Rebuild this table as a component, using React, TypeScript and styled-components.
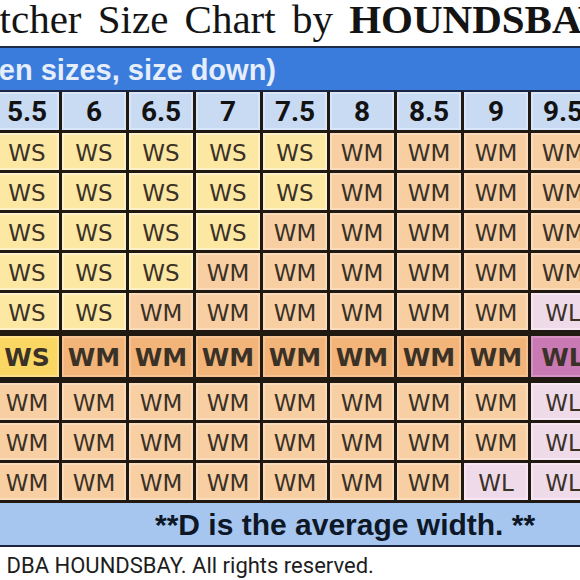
import React from "react";
import styled, { createGlobalStyle, css } from "styled-components";

type Size = "WS" | "WM" | "WL";

const sizes = ["5.5", "6", "6.5", "7", "7.5", "8", "8.5", "9", "9.5"];

const rows: Size[][] = [
  ["WS", "WS", "WS", "WS", "WS", "WM", "WM", "WM", "WM"],
  ["WS", "WS", "WS", "WS", "WS", "WM", "WM", "WM", "WM"],
  ["WS", "WS", "WS", "WS", "WM", "WM", "WM", "WM", "WM"],
  ["WS", "WS", "WS", "WM", "WM", "WM", "WM", "WM", "WM"],
  ["WS", "WS", "WM", "WM", "WM", "WM", "WM", "WM", "WL"],
  ["WS", "WM", "WM", "WM", "WM", "WM", "WM", "WM", "WL"],
  ["WM", "WM", "WM", "WM", "WM", "WM", "WM", "WM", "WL"],
  ["WM", "WM", "WM", "WM", "WM", "WM", "WM", "WM", "WL"],
  ["WM", "WM", "WM", "WM", "WM", "WM", "WM", "WL", "WL"],
];

// the row for the average width is drawn heavier
const averageRow = 5;

const fills = {
  WS: { fill: "#fce7a3", rim: "#fdf1c9", strong: "#fad662", strongRim: "#fbe08a" },
  WM: { fill: "#f8cfa3", rim: "#fadcbd", strong: "#f2b479", strongRim: "#f5c393" },
  WL: { fill: "#efdaea", rim: "#f6e7f2", strong: "#c97ab5", strongRim: "#d592c3" },
};

const GlobalStyle = createGlobalStyle`
  html, body {
    margin: 0;
    padding: 0;
    background: #ffffff;
    overflow: hidden;
  }
`;

const Page = styled.div`
  width: 580px;
  height: 580px;
  overflow: hidden;
  background: #ffffff;
  display: flex;
  flex-direction: column;
`;

const Title = styled.h1`
  margin: 0;
  height: 46px;
  font-family: "Liberation Serif", "Times New Roman", serif;
  font-size: 41px;
  font-weight: 400;
  line-height: 39px;
  color: #141414;
  white-space: nowrap;
  margin-left: -46px;
  word-spacing: 6px;

  b {
    font-weight: 700;
  }
`;

const Banner = styled.div`
  height: 39px;
  padding-top: 3px;
  background: #3a7cdc;
  border-top: 2px solid #1b2b48;
  border-bottom: 2px solid #1b2440;
  color: #e6edfb;
  font-family: "Liberation Sans", Arial, sans-serif;
  font-weight: 700;
  font-size: 29px;
  line-height: 39px;
  white-space: nowrap;
  text-indent: -35px;
`;

const Table = styled.div`
  display: flex;
  flex-direction: column;
  gap: 3px;
  padding: 0 0 3px;
  margin-left: -5px;
  width: 600px;
  background: #1f1912;
`;

const Row = styled.div<{ $h: number; $thick?: boolean }>`
  display: grid;
  grid-template-columns: repeat(9, 64px);
  gap: 3px;
  height: ${(p) => p.$h}px;
  ${(p) =>
    p.$thick &&
    css`
      margin: 3px 0;
    `}
`;

const HeadCell = styled.div`
  display: flex;
  align-items: center;
  justify-content: center;
  background: #c9daf3;
  box-shadow: inset 0 0 0 2px #d9e5f8;
  font-family: Roboto, "Liberation Sans", sans-serif;
  font-weight: 700;
  font-size: 28px;
  color: #121212;
`;

const Cell = styled.div<{ $size: Size; $strong?: boolean }>`
  display: flex;
  align-items: center;
  justify-content: center;
  padding-top: 2px;
  background: ${(p) => (p.$strong ? fills[p.$size].strong : fills[p.$size].fill)};
  box-shadow: inset 0 0 0 2px
    ${(p) => (p.$strong ? fills[p.$size].strongRim : fills[p.$size].rim)};
  font-family: "DejaVu Sans", Verdana, sans-serif;
  font-size: ${(p) => (p.$strong ? 25 : 23)}px;
  font-weight: ${(p) => (p.$strong ? 700 : 400)};
  color: #3a3127;
`;

const Note = styled.div`
  height: 42px;
  background: #a6c6f0;
  border-bottom: 2px solid #1b2440;
  font-family: "Liberation Sans", Arial, sans-serif;
  font-weight: 700;
  font-size: 30px;
  line-height: 44px;
  color: #0d1726;
  padding-left: 155px;
  white-space: nowrap;
`;

const Copyright = styled.div`
  padding-top: 6px;
  font-family: Roboto, "Liberation Sans", sans-serif;
  font-size: 22px;
  line-height: 26px;
  color: #1d1d1d;
  white-space: nowrap;
  text-indent: -42px;
`;

export default function App() {
  return (
    <Page>
      <GlobalStyle />
      <Title>
        Catcher Size Chart by <b>HOUNDSBAY</b>
      </Title>
      <Banner>(Men sizes, size down)</Banner>
      <Table>
        <Row $h={38}>
          {sizes.map((s) => (
            <HeadCell key={s}>{s}</HeadCell>
          ))}
        </Row>
        {rows.map((row, i) => (
          <Row key={i} $h={i === averageRow ? 41 : 37} $thick={i === averageRow}>
            {row.map((size, j) => (
              <Cell key={j} $size={size} $strong={i === averageRow}>
                {size}
              </Cell>
            ))}
          </Row>
        ))}
      </Table>
      <Note>**D is the average width. **</Note>
      <Copyright>LLC. DBA HOUNDSBAY. All rights reserved.</Copyright>
    </Page>
  );
}
